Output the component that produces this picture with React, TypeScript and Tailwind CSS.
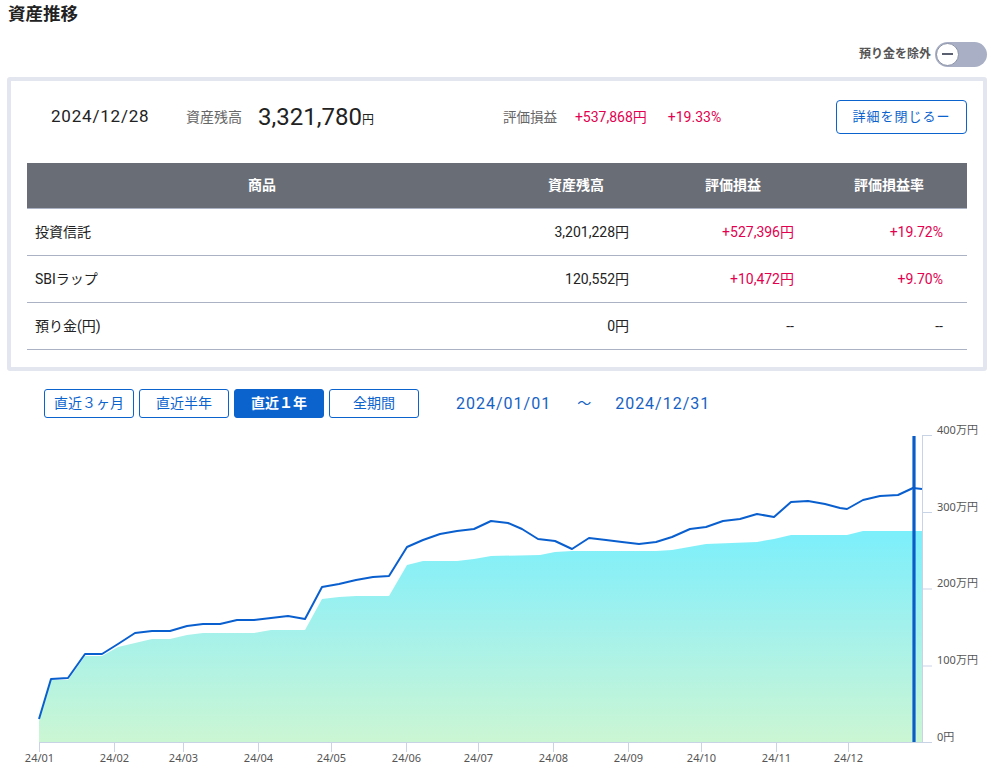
import React from "react";

const linePts: [number, number][] = [
  [39, 718], [51, 678], [68, 677], [85, 653], [102, 653], [118, 643], [135, 632], [152, 630], [170, 630],
  [187, 625], [203, 623], [220, 623], [237, 619], [254, 619], [271, 617], [288, 615], [305, 618], [322, 586],
  [339, 583], [356, 579], [373, 576], [389, 575], [407, 546], [423, 539], [440, 533], [457, 530], [474, 528],
  [491, 520], [508, 522], [522, 528], [538, 538], [555, 540], [572, 548], [589, 537], [606, 539], [622, 541],
  [639, 543], [656, 541], [672, 536], [690, 528], [706, 526], [723, 520], [740, 518], [757, 513], [774, 516],
  [791, 501], [808, 500], [825, 503], [840, 507], [847, 508], [863, 499], [880, 495], [898, 494], [913, 487],
  [922, 488],
];

const areaPts: [number, number][] = [
  [39, 720], [51, 679], [68, 679], [85, 655], [102, 655], [118, 646], [135, 642], [152, 638], [170, 638],
  [187, 634], [203, 632], [254, 632], [271, 629], [305, 629], [322, 598], [339, 596], [356, 595], [389, 595],
  [407, 564], [423, 560], [457, 560], [474, 558], [491, 555], [540, 554], [555, 551], [572, 550], [656, 550],
  [672, 549], [706, 543], [757, 541], [774, 538], [791, 534], [847, 534], [863, 530], [922, 530],
];

const months: [string, number][] = [
  ["24/01", 39], ["24/02", 114], ["24/03", 183], ["24/04", 258], ["24/05", 331], ["24/06", 406],
  ["24/07", 478], ["24/08", 553], ["24/09", 628], ["24/10", 701], ["24/11", 776], ["24/12", 848],
];

const yTicks: [string, number][] = [
  ["400万円", 434.5], ["300万円", 511.5], ["200万円", 588], ["100万円", 665], ["0円", 741.5],
];

function Chart() {
  const line = linePts.map((p) => p.join(",")).join(" ");
  const area = areaPts.map((p) => p.join(",")).join(" ") + " 922,741 39,741";
  return (
    <svg width="994" height="356" viewBox="0 417 994 356" className="block">
      <defs>
        <linearGradient id="ag" x1="0" y1="0" x2="0" y2="1">
          <stop offset="0" stopColor="#7befFb" />
          <stop offset="0.45" stopColor="#a3f1ec" />
          <stop offset="1" stopColor="#cbf6d3" />
        </linearGradient>
      </defs>
      <polygon points={area} fill="url(#ag)" />
      <polyline points={line} fill="none" stroke="#0a5fcf" strokeWidth="2" strokeLinejoin="round" />
      <line x1="914" y1="435" x2="914" y2="741" stroke="#0a5cc9" strokeWidth="3.2" />
      <line x1="922.5" y1="434" x2="922.5" y2="741.5" stroke="#c9d3e6" strokeWidth="1" />
      {yTicks.map(([t, y]) => (
        <g key={t}>
          <line x1="922.5" y1={y} x2="932" y2={y} stroke="#c9d3e6" strokeWidth="1" />
          <text x="937" y={y - 2} fontSize="11" fill="#555" fontFamily="'Noto Sans', 'Noto Sans CJK JP', sans-serif">
            {t}
          </text>
        </g>
      ))}
      <line x1="39" y1="741.5" x2="932" y2="741.5" stroke="#c9d3e6" strokeWidth="1" />
      {months.map(([t, x]) => (
        <g key={t}>
          <line x1={x + 0.5} y1="741.5" x2={x + 0.5} y2="751" stroke="#c9d3e6" strokeWidth="1" />
          <text x={x + 0.5} y="761" fontSize="11" fill="#555" textAnchor="middle" fontFamily="'Noto Sans', sans-serif">
            {t}
          </text>
        </g>
      ))}
    </svg>
  );
}

export default function App() {
  const font = { fontFamily: "Roboto, 'Noto Sans CJK JP', sans-serif" };
  return (
    <div className="w-[994px] h-[773px] bg-white overflow-hidden text-[#222]" style={font}>
      <div className="px-[8px] pt-[1px] h-[40px]">
        <h1 className="text-[17.5px] font-bold leading-[26px] text-[#222]">資産推移</h1>
      </div>
      <div className="flex justify-end items-center pr-[7px] h-[28px]">
        <span className="text-[12px] font-bold text-[#555] mr-[4px]">預り金を除外</span>
        <div className="relative w-[52px] h-[25px] rounded-full bg-[#a9b0c5]">
          <div className="absolute left-[1px] top-[1px] w-[23px] h-[23px] rounded-full bg-white border-[1.5px] border-[#8a91a6] flex items-center justify-center">
            <div className="w-[11px] h-[2px] bg-[#5b6070]" />
          </div>
        </div>
      </div>
      <div className="mx-[7px] mt-[9px] border-[4px] border-[#e3e6ee] rounded-[3px] bg-white px-[16px] pt-[19px] pb-[17px]">
        <div className="flex items-center h-[34px]">
          <span className="ml-[24px] text-[17px] w-[135px] text-[#222] tracking-[0.8px]">2024/12/28</span>
          <span className="text-[14px] text-[#666]">資産残高</span>
          <span className="ml-[16px] text-[24px] leading-none text-[#222]">3,321,780</span>
          <span className="text-[12px] text-[#222] mt-[6px]">円</span>
          <span className="ml-[129px] text-[13.5px] text-[#666]">評価損益</span>
          <span className="ml-[18px] text-[14px] text-[#e3004f]">+537,868円</span>
          <span className="ml-[21px] text-[14px] text-[#e3004f]">+19.33%</span>
          <button className="ml-auto w-[131px] h-[34px] border-[1.5px] border-[#0b63ce] rounded-[4px] text-[13px] text-[#0b63ce] bg-white tracking-[1px]">
            詳細を閉じるー
          </button>
        </div>
        <div className="mt-[29px]">
          <div className="grid grid-cols-[470px_158px_156px_156px] h-[46px] bg-[#696d76] text-white text-[14px] font-bold items-center text-center border-b border-[#aab2c4]">
            <div>商品</div>
            <div>資産残高</div>
            <div>評価損益</div>
            <div>評価損益率</div>
          </div>
          {[
            ["投資信託", "3,201,228円", "+527,396円", "+19.72%", true],
            ["SBIラップ", "120,552円", "+10,472円", "+9.70%", true],
            ["預り金(円)", "0円", "--", "--", false],
          ].map(([a, b, c, d, red]) => (
            <div
              key={a as string}
              className="grid grid-cols-[470px_158px_156px_156px] h-[47px] items-center text-[14px] border-b border-[#aab2c4]"
            >
              <div className="pl-[8px] text-[#222]">{a}</div>
              <div className="text-right pr-[26px] text-[#222]">{b}</div>
              <div className={"text-right pr-[17px] " + (red ? "text-[#e3004f]" : "text-[#222]")}>{c}</div>
              <div className={"text-right pr-[24px] " + (red ? "text-[#e3004f]" : "text-[#222]")}>{d}</div>
            </div>
          ))}
        </div>
      </div>
      <div className="flex items-center h-[29px] mt-[18px] pl-[44px]">
        <div className="flex gap-[5px]">
          <button className="w-[90px] h-[29px] border border-[#0b63ce] rounded-[3px] text-[14px] text-[#0b63ce] bg-white">直近３ヶ月</button>
          <button className="w-[90px] h-[29px] border border-[#0b63ce] rounded-[3px] text-[14px] text-[#0b63ce] bg-white">直近半年</button>
          <button className="w-[90px] h-[29px] border border-[#0b63ce] rounded-[3px] text-[14px] text-white font-bold bg-[#0b63ce]">直近１年</button>
          <button className="w-[90px] h-[29px] border border-[#0b63ce] rounded-[3px] text-[14px] text-[#0b63ce] bg-white">全期間</button>
        </div>
        <span className="ml-[37px] text-[16px] text-[#1662c4] tracking-[1px]">2024/01/01</span>
        <span className="ml-[26px] text-[14px] text-[#1662c4]">～</span>
        <span className="ml-[24px] text-[16px] text-[#1662c4] tracking-[1px]">2024/12/31</span>
      </div>
      <div>
        <Chart />
      </div>
    </div>
  );
}
